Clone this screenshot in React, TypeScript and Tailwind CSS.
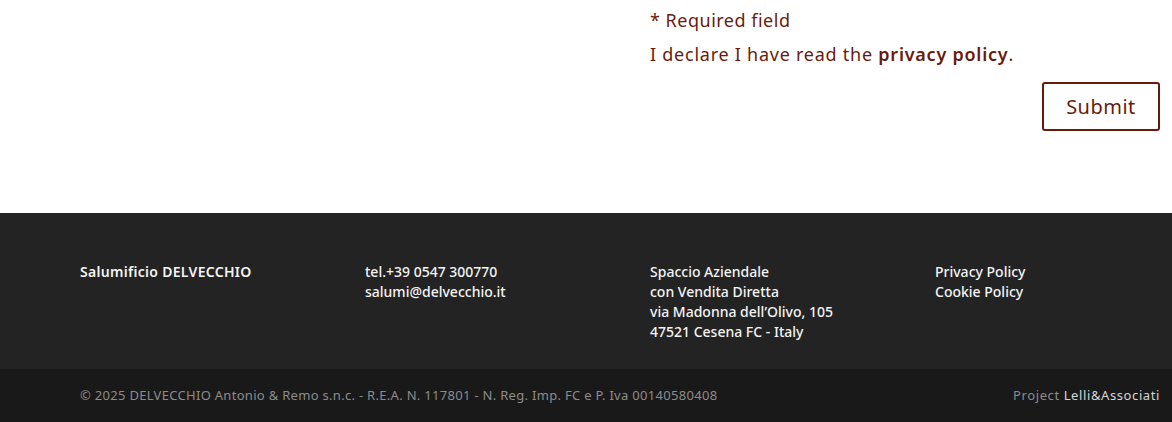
export default function App() {
  const font = { fontFamily: '"Noto Sans", "Open Sans", sans-serif' };
  return (
    <div className="w-[1172px] h-[422px] bg-white flex flex-col" style={font}>
      <div className="h-[213px] px-[12px] flex flex-col">
        <div className="ml-[638px] pt-[7px] flex flex-col text-[#6a1a0c]">
          <div className="text-[18px] leading-[26px] tracking-[0.5px]">* Required field</div>
          <div className="text-[18px] leading-[26px] mt-[8px] tracking-[0.75px]">
            I declare I have read the <span className="font-semibold">privacy policy</span>.
          </div>
          <div className="flex justify-end mt-[15px]">
            <button className="w-[118px] h-[49px] border-2 border-[#6a1a0c] rounded-[3px] text-[20px] tracking-[0.5px] text-[#6a1a0c]">
              Submit
            </button>
          </div>
        </div>
      </div>
      <div className="h-[156px] bg-[#232323] pl-[80px] pr-[12px] pt-[49px]">
        <div className="grid grid-cols-4 gap-[60px] text-[14px] leading-[20px] font-medium text-[#f4f4f4]">
          <div className="font-semibold tracking-[0.3px]">Salumificio DELVECCHIO</div>
          <div>
            <div>tel.+39 0547 300770</div>
            <div>salumi@delvecchio.it</div>
          </div>
          <div>
            <div>Spaccio Aziendale</div>
            <div>con Vendita Diretta</div>
            <div>via Madonna dell’Olivo, 105</div>
            <div>47521 Cesena FC - Italy</div>
          </div>
          <div>
            <div>Privacy Policy</div>
            <div>Cookie Policy</div>
          </div>
        </div>
      </div>
      <div className="flex-1 bg-[#191919] pl-[80px] pr-[12px] flex items-center justify-between text-[13px]">
        <div className="text-[#8c8c8c] tracking-[0.3px]">
          © 2025 DELVECCHIO Antonio &amp; Remo s.n.c. - R.E.A. N. 117801 - N. Reg. Imp. FC e P. Iva 00140580408
        </div>
        <div className="text-[#8c8c8c] tracking-[0.6px]">
          Project <span className="text-[#d6d6d6]">Lelli&amp;Associati</span>
        </div>
      </div>
    </div>
  );
}
